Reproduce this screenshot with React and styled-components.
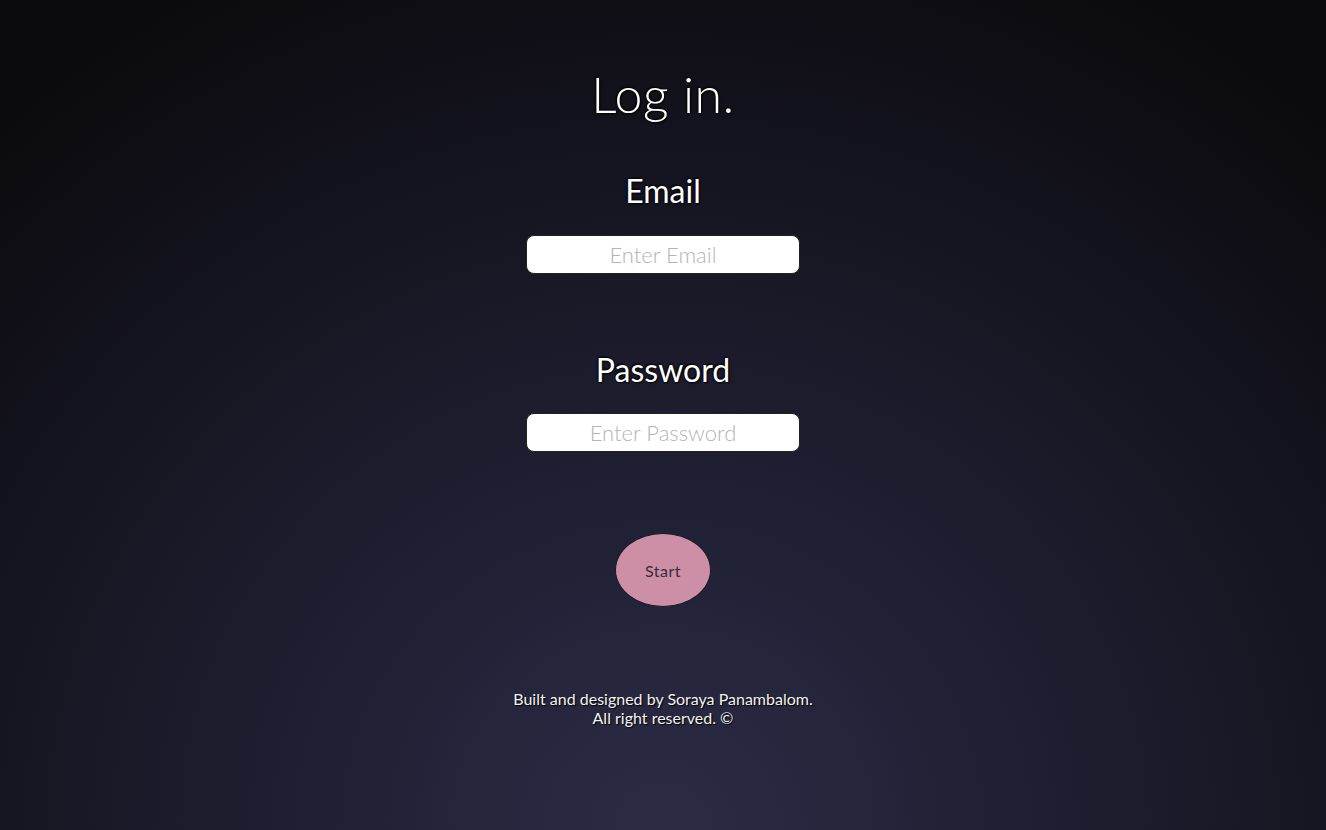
import React from "react";
import styled, { createGlobalStyle } from "styled-components";

const Global = createGlobalStyle`
  html, body { margin: 0; padding: 0; }
  body {
    font-family: "Lato", "Noto Sans", sans-serif;
    background: #0b0a0e;
  }
`;

const Page = styled.main`
  min-height: 830px;
  box-sizing: border-box;
  display: flex;
  flex-direction: column;
  align-items: center;
  padding-top: 65px;
  background: radial-gradient(ellipse 75% 115% at 50% 100%, #2b2b46 0%, #1b1b2b 50%, #0b0a0e 100%);
  color: #fff;
`;

const Title = styled.h1`
  margin: 0;
  font-size: 50px;
  font-weight: 300;
  line-height: 58px;
  letter-spacing: 0.5px;
  text-shadow: 1px 1px 2px #000, -1px -1px 2px #000;
`;

const Form = styled.form`
  display: flex;
  flex-direction: column;
  align-items: center;
`;

const Label = styled.label`
  display: block;
  margin-top: ${(p) => p.$top}px;
  font-size: 32px;
  font-weight: 400;
  line-height: 36px;
  text-shadow: 1px 1px 2px #000, -1px -1px 2px #000;
`;

const Input = styled.input`
  box-sizing: border-box;
  width: 274px;
  height: 39px;
  margin-top: ${(p) => p.$top}px;
  border: 1px solid #222;
  border-radius: 8px;
  background: #fff;
  text-align: center;
  font-family: "Lato", "Noto Sans", sans-serif;
  font-size: 22px;
  font-weight: 300;
  color: #333;
  outline: none;
  &::placeholder {
    color: #b4b4b4;
  }
`;

const Button = styled.button`
  width: 96px;
  height: 74px;
  margin-top: 81px;
  border-radius: 50%;
  border: 1px solid #1a1a28;
  background: #cc8fa6;
  color: #3a2a3a;
  font-family: "Lato", "Noto Sans", sans-serif;
  font-size: 16px;
  letter-spacing: 0.5px;
  cursor: pointer;
`;

const Footer = styled.footer`
  margin-top: 82px;
  text-align: center;
  font-size: 16px;
  line-height: 19px;
  color: #f2f2f2;
  text-shadow: 1px 1px 1px #000;
`;

export default function App() {
  return (
    <>
      <Global />
      <Page>
        <Title>Log in.</Title>
        <Form onSubmit={(e) => e.preventDefault()}>
          <Label $top={50} htmlFor="email">Email</Label>
          <Input $top={26} id="email" type="email" placeholder="Enter Email" />
          <Label $top={78} htmlFor="password">Password</Label>
          <Input $top={25} id="password" type="password" placeholder="Enter Password" />
          <Button type="submit">Start</Button>
        </Form>
        <Footer>
          Built and designed by Soraya Panambalom.
          <br />
          All right reserved. ©
        </Footer>
      </Page>
    </>
  );
}
